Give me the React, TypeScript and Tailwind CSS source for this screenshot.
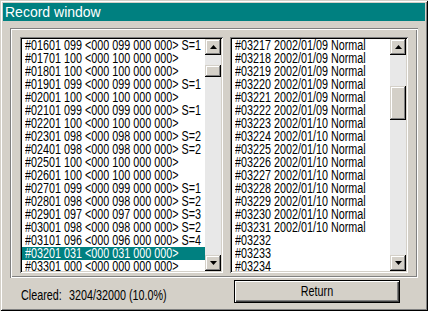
import React from 'react';

const leftRows = [
	'#01601 099 <000 099 000 000> S=1',
	'#01701 100 <000 100 000 000>',
	'#01801 100 <000 100 000 000>',
	'#01901 099 <000 099 000 000> S=1',
	'#02001 100 <000 100 000 000>',
	'#02101 099 <000 099 000 000> S=1',
	'#02201 100 <000 100 000 000>',
	'#02301 098 <000 098 000 000> S=2',
	'#02401 098 <000 098 000 000> S=2',
	'#02501 100 <000 100 000 000>',
	'#02601 100 <000 100 000 000>',
	'#02701 099 <000 099 000 000> S=1',
	'#02801 098 <000 098 000 000> S=2',
	'#02901 097 <000 097 000 000> S=3',
	'#03001 098 <000 098 000 000> S=2',
	'#03101 096 <000 096 000 000> S=4',
	'#03201 031 <000 031 000 000>',
	'#03301 000 <000 000 000 000>',
];

const rightRows = [
	'#03217 2002/01/09 Normal',
	'#03218 2002/01/09 Normal',
	'#03219 2002/01/09 Normal',
	'#03220 2002/01/09 Normal',
	'#03221 2002/01/09 Normal',
	'#03222 2002/01/09 Normal',
	'#03223 2002/01/10 Normal',
	'#03224 2002/01/10 Normal',
	'#03225 2002/01/10 Normal',
	'#03226 2002/01/10 Normal',
	'#03227 2002/01/10 Normal',
	'#03228 2002/01/10 Normal',
	'#03229 2002/01/10 Normal',
	'#03230 2002/01/10 Normal',
	'#03231 2002/01/10 Normal',
	'#03232',
	'#03233',
	'#03234',
];

const raised =
	'shadow-[inset_-1px_-1px_#000,inset_1px_1px_#d4d0c8,inset_-2px_-2px_#808080,inset_2px_2px_#fff]';

// the dialog font is a tall, narrow bitmap face; squeeze Liberation Sans to match
const narrow = 'inline-block origin-left scale-x-[0.77]';

function ArrowButton({ down }: { down?: boolean }) {
	return (
		<div className={`h-[16px] w-[16px] bg-[#d4d0c8] flex items-center justify-center ${raised}`}>
			<svg width="7" height="4" viewBox="0 0 7 4">
				{down ? <polygon points="0,0 7,0 3.5,4" fill="#000" /> : <polygon points="3.5,0 7,4 0,4" fill="#000" />}
			</svg>
		</div>
	);
}

function ListBox({
	rows,
	selected,
	thumbTop,
	thumbHeight,
	width,
}: {
	rows: string[];
	selected?: number;
	thumbTop: string;
	thumbHeight: string;
	width: string;
}) {
	return (
		<div
			className={`${width} h-[236px] p-[2px] flex shadow-[inset_1px_1px_#808080,inset_-1px_-1px_#fff,inset_2px_2px_#000,inset_-2px_-2px_#d4d0c8]`}
		>
			<div className="flex-1 bg-white overflow-hidden">
				{rows.map((row, index) => (
					<div
						key={index}
						className={`h-[13px] leading-[13px] pl-[3px] whitespace-nowrap ${
							index === selected ? 'bg-[#008080] text-white' : 'text-black'
						}`}
					>
						<span className={narrow}>{row}</span>
					</div>
				))}
			</div>
			{/* scrollbar */}
			<div className="w-[16px] flex flex-col">
				<ArrowButton />
				<div className="flex-1 bg-[#e8e8e8] flex flex-col">
					<div className={thumbTop} />
					<div className={`${thumbHeight} bg-[#d4d0c8] ${raised}`} />
				</div>
				<ArrowButton down />
			</div>
		</div>
	);
}

export default function App() {
	return (
		<div
			className="w-[428px] h-[311px] bg-[#d4d0c8] p-[3px] flex flex-col text-[14px] shadow-[inset_1px_1px_#d4d0c8,inset_-1px_-1px_#000,inset_2px_2px_#fff,inset_-2px_-2px_#808080]"
			style={{ fontFamily: "'Liberation Sans', Arial, sans-serif" }}
		>
			<div className="h-[18px] bg-[#008080] text-white pl-[2px] leading-[18px] text-[14px]">Record window</div>

			{/* Group frame */}
			<div className="mx-[7px] mt-[7px] h-[250px] pt-[9px] px-[10px] flex gap-[7px] shadow-[inset_1px_1px_#808080,inset_-1px_-1px_#fff,inset_2px_2px_#fff,inset_-2px_-2px_#808080]">
				<ListBox rows={leftRows} selected={16} thumbTop="h-[10px]" thumbHeight="h-[12px]" width="w-[203px]" />
				<ListBox rows={rightRows} thumbTop="h-[31px]" thumbHeight="h-[34px]" width="w-[178px]" />
			</div>

			{/* Footer */}
			<div className="flex mt-[2px] h-[23px]">
				<div className="ml-[18px] w-[48px] mt-[7px] leading-[16px] whitespace-nowrap text-black">
					<span className={narrow}>Cleared:</span>
				</div>
				<div className="mt-[7px] leading-[16px] whitespace-nowrap text-black">
					<span className={narrow}>3204/32000 (10.0%)</span>
				</div>
				<div className="ml-auto mr-[25px] w-[166px] h-[23px] border border-black bg-[#d4d0c8] flex items-center justify-center shadow-[inset_1px_1px_#fff,inset_-1px_-1px_#404040,inset_-2px_-2px_#808080]">
					<span className="inline-block scale-x-[0.77]">Return</span>
				</div>
			</div>
		</div>
	);
}
